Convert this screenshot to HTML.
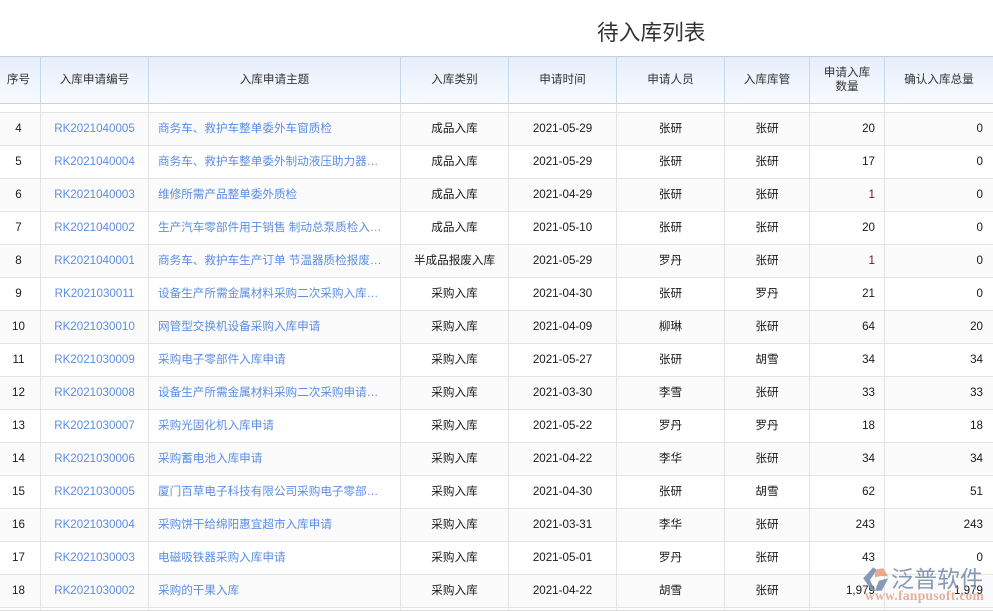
<!DOCTYPE html>
<html lang="zh-CN">
<head>
<meta charset="utf-8">
<title>待入库列表</title>
<style>
html,body{margin:0;padding:0;background:#fff}
body{width:993px;height:611px;overflow:hidden;position:relative;font-family:"Liberation Sans","Noto Sans CJK SC",sans-serif;font-size:11.6px;color:#1a1a1a}
h1{position:absolute;left:597px;top:17px;margin:0;font-size:21.7px;line-height:32px;font-weight:400;color:#333;white-space:nowrap}
table{position:absolute;left:0;top:56px;width:993px;table-layout:fixed;border-collapse:separate;border-spacing:0}
th{padding:0;font-weight:400;font-size:11.6px;line-height:14px;color:#333;background:linear-gradient(#e6eefb,#f8fbff);border-top:1px solid #bfd0e6;border-bottom:1px solid #bfd5ea;border-right:1px solid #c3d8ec;box-sizing:border-box;height:48px;text-align:center}
td{height:33px;box-sizing:border-box;padding:0 0 2px;border-right:1px solid #e4e4e4;border-bottom:1px solid #e4e4e4;text-align:center;white-space:nowrap;overflow:hidden;text-overflow:ellipsis}
th:first-child,td:first-child{padding-right:3px}
tr.sp td{height:9px;padding:0;background:#fff;font-size:0;line-height:0}
tr.e td{height:3px;padding:0;background:#fff;font-size:0;line-height:0;border-bottom:1px solid #ddd}
tr.a td{background:#fbfbfb}
th:last-child,td:last-child{border-right:0}
td.l{color:#5b8de6}
td.t{text-align:left;padding:0 15px 2px 9px;color:#5b8de6}
td.r{text-align:right;padding-right:9px}
td:last-child.r{padding-right:10px}
td.k{color:#7a1030}
#wm{position:absolute;left:860px;top:562px;width:133px;height:45px;pointer-events:none}
</style>
</head>
<body>
<h1>待入库列表</h1>
<table>
<colgroup><col style="width:41px"><col style="width:108px"><col style="width:252px"><col style="width:108px"><col style="width:108px"><col style="width:108px"><col style="width:85px"><col style="width:75px"><col style="width:108px"></colgroup>
<tr><th>序号</th><th>入库申请编号</th><th>入库申请主题</th><th>入库类别</th><th>申请时间</th><th>申请人员</th><th>入库库管</th><th>申请入库<br>数量</th><th>确认入库总量</th></tr>
<tr class="sp"><td></td><td></td><td></td><td></td><td></td><td></td><td></td><td></td><td></td></tr>
<tr class="a"><td>4</td><td class="l">RK2021040005</td><td class="t">商务车、救护车整单委外车窗质检</td><td>成品入库</td><td>2021-05-29</td><td>张研</td><td>张研</td><td class="r">20</td><td class="r">0</td></tr>
<tr><td>5</td><td class="l">RK2021040004</td><td class="t">商务车、救护车整单委外制动液压助力器质检入库</td><td>成品入库</td><td>2021-05-29</td><td>张研</td><td>张研</td><td class="r">17</td><td class="r">0</td></tr>
<tr class="a"><td>6</td><td class="l">RK2021040003</td><td class="t">维修所需产品整单委外质检</td><td>成品入库</td><td>2021-04-29</td><td>张研</td><td>张研</td><td class="r k">1</td><td class="r">0</td></tr>
<tr><td>7</td><td class="l">RK2021040002</td><td class="t">生产汽车零部件用于销售 制动总泵质检入库申请</td><td>成品入库</td><td>2021-05-10</td><td>张研</td><td>张研</td><td class="r">20</td><td class="r">0</td></tr>
<tr class="a"><td>8</td><td class="l">RK2021040001</td><td class="t">商务车、救护车生产订单 节温器质检报废入库申请</td><td>半成品报废入库</td><td>2021-05-29</td><td>罗丹</td><td>张研</td><td class="r k">1</td><td class="r">0</td></tr>
<tr><td>9</td><td class="l">RK2021030011</td><td class="t">设备生产所需金属材料采购二次采购入库申请单</td><td>采购入库</td><td>2021-04-30</td><td>张研</td><td>罗丹</td><td class="r">21</td><td class="r">0</td></tr>
<tr class="a"><td>10</td><td class="l">RK2021030010</td><td class="t">网管型交换机设备采购入库申请</td><td>采购入库</td><td>2021-04-09</td><td>柳琳</td><td>张研</td><td class="r">64</td><td class="r">20</td></tr>
<tr><td>11</td><td class="l">RK2021030009</td><td class="t">采购电子零部件入库申请</td><td>采购入库</td><td>2021-05-27</td><td>张研</td><td>胡雪</td><td class="r">34</td><td class="r">34</td></tr>
<tr class="a"><td>12</td><td class="l">RK2021030008</td><td class="t">设备生产所需金属材料采购二次采购申请入库单</td><td>采购入库</td><td>2021-03-30</td><td>李雪</td><td>张研</td><td class="r">33</td><td class="r">33</td></tr>
<tr><td>13</td><td class="l">RK2021030007</td><td class="t">采购光固化机入库申请</td><td>采购入库</td><td>2021-05-22</td><td>罗丹</td><td>罗丹</td><td class="r">18</td><td class="r">18</td></tr>
<tr class="a"><td>14</td><td class="l">RK2021030006</td><td class="t">采购蓄电池入库申请</td><td>采购入库</td><td>2021-04-22</td><td>李华</td><td>张研</td><td class="r">34</td><td class="r">34</td></tr>
<tr><td>15</td><td class="l">RK2021030005</td><td class="t">厦门百草电子科技有限公司采购电子零部件入库</td><td>采购入库</td><td>2021-04-30</td><td>张研</td><td>胡雪</td><td class="r">62</td><td class="r">51</td></tr>
<tr class="a"><td>16</td><td class="l">RK2021030004</td><td class="t">采购饼干给绵阳惠宜超市入库申请</td><td>采购入库</td><td>2021-03-31</td><td>李华</td><td>张研</td><td class="r">243</td><td class="r">243</td></tr>
<tr><td>17</td><td class="l">RK2021030003</td><td class="t">电磁吸铁器采购入库申请</td><td>采购入库</td><td>2021-05-01</td><td>罗丹</td><td>张研</td><td class="r">43</td><td class="r">0</td></tr>
<tr class="a"><td>18</td><td class="l">RK2021030002</td><td class="t">采购的干果入库</td><td>采购入库</td><td>2021-04-22</td><td>胡雪</td><td>张研</td><td class="r">1,979</td><td class="r">1,979</td></tr>
<tr class="e"><td></td><td></td><td></td><td></td><td></td><td></td><td></td><td></td><td></td></tr>
</table>
<svg id="wm" viewBox="0 0 133 45" xmlns="http://www.w3.org/2000/svg">
<g opacity=".85">
<path d="M3.3 16.3 L13.3 5.3 L16.7 8 L10 18 L15 28.7 L11.7 28.7 Z" fill="#7189ad"/>
<path d="M16.7 7.3 L23.3 6.3 L28.3 14.7 C24 13.5 19 14 15 15.3 C14.5 12 15.5 9.5 16.7 7.3 Z" fill="#e79a78"/>
<path d="M28.3 16.3 L21.7 28.7 L15 28.7 L19 18.7 Z" fill="#7189ad"/>
<text x="31" y="25" font-family="'Noto Sans CJK SC','Liberation Sans',sans-serif" font-size="23" fill="#7289a8">泛普软件</text>
<text x="5" y="38" font-family="'Liberation Serif',serif" font-size="13.5" font-weight="700" letter-spacing=".3" fill="#e0a48c">www.fanpusoft.com</text>
</g>
</svg>
</body>
</html>
